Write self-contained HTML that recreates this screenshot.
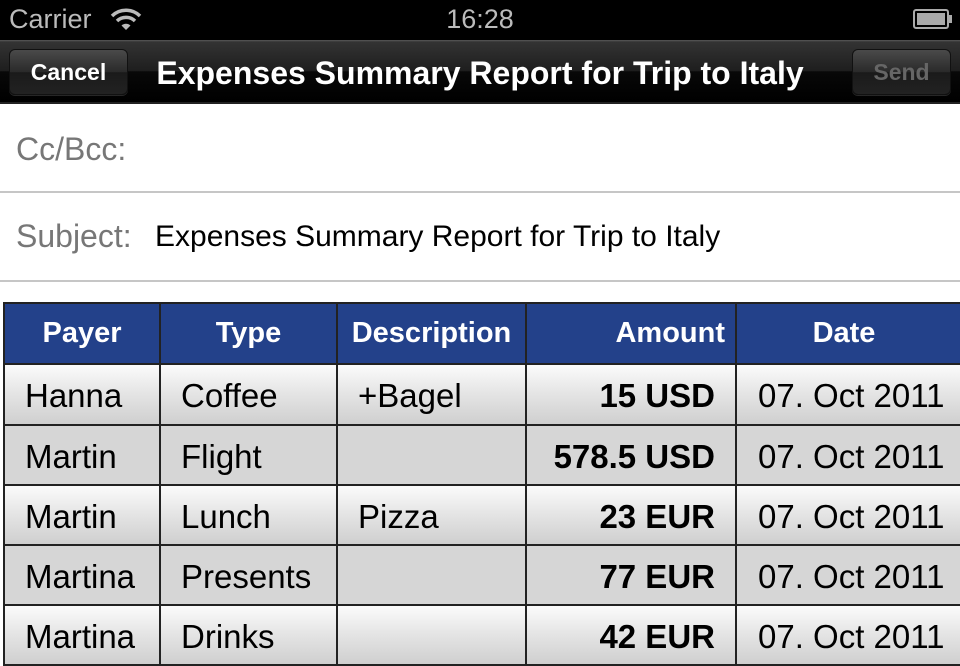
<!DOCTYPE html>
<html><head><meta charset="utf-8"><style>
*{margin:0;padding:0;box-sizing:border-box}
body{width:960px;height:640px;overflow:hidden;background:#fff;font-family:"Liberation Sans",sans-serif;position:relative}
.abs{position:absolute}
#status{left:0;top:0;width:960px;height:40px;background:#000;color:#bbb;font-size:27px}
#nav{left:0;top:40px;width:960px;height:64px;background:linear-gradient(#5a5a5a 0,#333 2px,#1e1e1e 50%,#080808 51%,#000 100%);border-bottom:2px solid #222}
.btn{position:absolute;top:9px;height:46px;border-radius:6px;border:1px solid #111;background:linear-gradient(#4a4a4a,#2a2a2a 50%,#1a1a1a 51%,#222);box-shadow:0 1px 0 rgba(255,255,255,.15);font-weight:bold;font-size:23px;line-height:44px;text-align:center}
.title{left:110px;width:740px;top:0;line-height:66px;text-align:center;color:#fff;font-weight:bold;font-size:32px}
.field{left:0;width:960px;border-bottom:2px solid #c6c6c6;font-size:31px}
.lab{color:#777}
.cell{position:absolute;border:2px solid #222;font-size:33px;line-height:62px;overflow:hidden;white-space:nowrap;color:#000}
.h{background:#23418a;color:#fff;font-weight:bold;font-size:29px;text-align:center;line-height:58px}
.g{background:linear-gradient(#fbfbfb,#e6e6e6 45%,#cfcfcf 100%)}
.f{background:#d6d6d6}
.b{font-weight:bold;text-align:right;padding-right:20px}
</style></head><body>
<div id="status" class="abs">
<span class="abs" style="left:9px;top:4px">Carrier</span>
<svg class="abs" style="left:110px;top:7px" width="32" height="24" viewBox="0 0 32 24"><path d="M2 9 A20 20 0 0 1 30 9" stroke="#bbb" stroke-width="3.5" fill="none"/><path d="M7 14 A13 13 0 0 1 25 14" stroke="#bbb" stroke-width="3.5" fill="none"/><path d="M11.5 18.5 A6.5 6.5 0 0 1 20.5 18.5 L16 23 Z" fill="#bbb"/></svg>
<span class="abs" style="left:0;width:960px;text-align:center;top:4px">16:28</span>
<div class="abs" style="left:913px;top:9px;width:36px;height:20px;border:2px solid #aaa;border-radius:3px;padding:2px"><div style="width:100%;height:100%;background:#aaa"></div></div>
<div class="abs" style="left:949px;top:15px;width:3px;height:8px;background:#aaa"></div>
</div>
<div id="nav" class="abs">
<div class="btn" style="left:9px;width:119px;color:#fff">Cancel</div>
<div class="abs title">Expenses Summary Report for Trip to Italy</div>
<div class="btn" style="left:852px;width:99px;color:#666">Send</div>
</div>
<div class="abs field" style="top:106px;height:87px"><span class="abs lab" style="left:16px;top:25px;font-size:32px">Cc/Bcc:</span></div>
<div class="abs field" style="top:193px;height:89px"><span class="abs lab" style="left:16px;top:25px;font-size:32px">Subject:</span><span class="abs" style="left:155px;top:27px;font-size:30px">Expenses Summary Report for Trip to Italy</span></div>

<div class="cell h" style="left:3px;top:302px;width:158px;height:63px">Payer</div>
<div class="cell h" style="left:159px;top:302px;width:179px;height:63px">Type</div>
<div class="cell h" style="left:336px;top:302px;width:191px;height:63px">Description</div>
<div class="cell h" style="left:525px;top:302px;width:212px;height:63px;text-align:right;padding-right:10px">Amount</div>
<div class="cell h" style="left:735px;top:302px;width:240px;height:63px;padding-right:22px">Date</div>

<div class="cell g" style="left:3px;top:363px;width:158px;height:63px;padding-left:20px">Hanna</div>
<div class="cell g" style="left:159px;top:363px;width:179px;height:63px;padding-left:20px">Coffee</div>
<div class="cell g" style="left:336px;top:363px;width:191px;height:63px;padding-left:20px">+Bagel</div>
<div class="cell g b" style="left:525px;top:363px;width:212px;height:63px">15 USD</div>
<div class="cell g" style="left:735px;top:363px;width:240px;height:63px;padding-left:21px">07. Oct 2011</div>

<div class="cell f" style="left:3px;top:424px;width:158px;height:62px;padding-left:20px">Martin</div>
<div class="cell f" style="left:159px;top:424px;width:179px;height:62px;padding-left:20px">Flight</div>
<div class="cell f" style="left:336px;top:424px;width:191px;height:62px"></div>
<div class="cell f b" style="left:525px;top:424px;width:212px;height:62px">578.5 USD</div>
<div class="cell f" style="left:735px;top:424px;width:240px;height:62px;padding-left:21px">07. Oct 2011</div>

<div class="cell g" style="left:3px;top:484px;width:158px;height:62px;padding-left:20px">Martin</div>
<div class="cell g" style="left:159px;top:484px;width:179px;height:62px;padding-left:20px">Lunch</div>
<div class="cell g" style="left:336px;top:484px;width:191px;height:62px;padding-left:20px">Pizza</div>
<div class="cell g b" style="left:525px;top:484px;width:212px;height:62px">23 EUR</div>
<div class="cell g" style="left:735px;top:484px;width:240px;height:62px;padding-left:21px">07. Oct 2011</div>

<div class="cell f" style="left:3px;top:544px;width:158px;height:62px;padding-left:20px">Martina</div>
<div class="cell f" style="left:159px;top:544px;width:179px;height:62px;padding-left:20px">Presents</div>
<div class="cell f" style="left:336px;top:544px;width:191px;height:62px"></div>
<div class="cell f b" style="left:525px;top:544px;width:212px;height:62px">77 EUR</div>
<div class="cell f" style="left:735px;top:544px;width:240px;height:62px;padding-left:21px">07. Oct 2011</div>

<div class="cell g" style="left:3px;top:604px;width:158px;height:62px;padding-left:20px">Martina</div>
<div class="cell g" style="left:159px;top:604px;width:179px;height:62px;padding-left:20px">Drinks</div>
<div class="cell g" style="left:336px;top:604px;width:191px;height:62px"></div>
<div class="cell g b" style="left:525px;top:604px;width:212px;height:62px">42 EUR</div>
<div class="cell g" style="left:735px;top:604px;width:240px;height:62px;padding-left:21px">07. Oct 2011</div>
</body></html>
